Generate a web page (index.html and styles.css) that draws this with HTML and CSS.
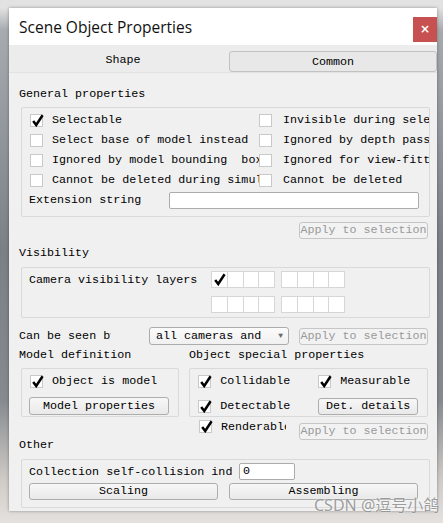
FILE: index.html
```html
<!DOCTYPE html>
<html lang="en">
<head>
    <meta charset="UTF-8">
    <meta name="viewport" content="width=device-width, initial-scale=1.0">
    <title>Scene Object Properties</title>
    <link rel="stylesheet" href="styles.css">
</head>
<body>
    <div class="dialog">
        <div class="titlebar">
            <span class="title">Scene Object Properties</span>
            <span class="close">&#215;</span>
        </div>
        <div class="tabs">
            <div class="tab">Shape</div>
            <div class="tab active">Common</div>
        </div>

        <div class="content">
            <div class="heading first">General properties</div>
            <div class="group general">
                <div class="check-grid">
                    <label class="check"><span class="box on"></span><span class="text">Selectable</span></label>
                    <label class="check right"><span class="box"></span><span class="text">Invisible during selection</span></label>
                    <label class="check"><span class="box"></span><span class="text">Select base of model instead</span></label>
                    <label class="check right"><span class="box"></span><span class="text">Ignored by depth pass</span></label>
                    <label class="check"><span class="box"></span><span class="text">Ignored by model bounding  box</span></label>
                    <label class="check right"><span class="box"></span><span class="text">Ignored for view-fitting</span></label>
                    <label class="check"><span class="box"></span><span class="text">Cannot be deleted during simulation</span></label>
                    <label class="check right"><span class="box"></span><span class="text">Cannot be deleted</span></label>
                    <div class="ext-row">
                        <span class="ext-label">Extension string</span>
                        <span class="field ext-field"></span>
                    </div>
                </div>
            </div>
            <div class="apply-row"><button class="btn disabled apply">Apply to selection</button></div>

            <div class="heading">Visibility</div>
            <div class="group visibility">
                <span class="layers-label">Camera visibility layers</span>
                <div class="layers">
                    <div class="layer-set"><span class="cell on"></span><span class="cell"></span><span class="cell"></span><span class="cell"></span></div>
                    <div class="layer-set"><span class="cell"></span><span class="cell"></span><span class="cell"></span><span class="cell"></span></div>
                    <div class="layer-set"><span class="cell"></span><span class="cell"></span><span class="cell"></span><span class="cell"></span></div>
                    <div class="layer-set"><span class="cell"></span><span class="cell"></span><span class="cell"></span><span class="cell"></span></div>
                </div>
            </div>

            <div class="seen-row">
                <span class="seen-label"><span class="seen-text">Can be seen by</span></span>
                <div class="combo"><span class="combo-text">all cameras and lights</span><span class="arrow">&#9660;</span></div>
                <button class="btn disabled apply">Apply to selection</button>
            </div>

            <div class="heading-row">
                <span class="heading model-heading">Model definition</span>
                <span class="heading">Object special properties</span>
            </div>
            <div class="group-row">
                <div class="group model">
                    <label class="check"><span class="box on"></span><span class="text">Object is model</span></label>
                    <button class="btn model-btn">Model properties</button>
                </div>
                <div class="group special">
                    <label class="check"><span class="box on"></span><span class="text">Collidable</span></label>
                    <label class="check"><span class="box on"></span><span class="text">Measurable</span></label>
                    <label class="check"><span class="box on"></span><span class="text">Detectable</span></label>
                    <button class="btn det-btn">Det. details</button>
                </div>
            </div>
            <div class="render-row">
                <label class="check"><span class="box on"></span><span class="text render-text">Renderable</span></label>
                <button class="btn disabled apply">Apply to selection</button>
            </div>

            <div class="heading other-heading">Other</div>
            <div class="group other">
                <div class="other-row">
                    <span class="coll-label">Collection self-collision indicator</span>
                    <span class="field coll-field">0</span>
                </div>
                <div class="other-row buttons">
                    <button class="btn wide">Scaling</button>
                    <button class="btn wide">Assembling</button>
                </div>
            </div>
        </div>
    </div>
    <div class="watermark">CSDN @逗号小鸽</div>
</body>
</html>
```

FILE: styles.css
```css
* {
    margin: 0;
    padding: 0;
    box-sizing: border-box;
}

body {
    position: relative;
    width: 443px;
    height: 523px;
    overflow: hidden;
    font-family: "Liberation Mono", "DejaVu Sans Mono", monospace;
    font-size: 11.7px;
    line-height: 14px;
    color: #000;
    background: linear-gradient(to bottom, #e2e2e2 0, #e2e2e2 8px, #a7abb0 30px, #7b8087 250px, #868a8f 400px, #cfcbc7 480px, #e4e1de 523px);
}

.dialog {
    margin: 8px 0 0 9px;
    width: 428px;
    height: 503px;
    background: #f0f0f0;
    box-shadow: 0 0 3px rgba(0, 0, 0, 0.35);
}

.titlebar {
    display: flex;
    height: 37px;
    background: #fff;
    padding-left: 10px;
}

.title {
    font-family: "Open Sans", "Noto Sans", sans-serif;
    font-size: 15.5px;
    line-height: 39px;
    color: #111;
}

.close {
    margin: 9px 0 0 auto;
    width: 24px;
    height: 25px;
    background: #c75050;
    color: #fff;
    font-family: "DejaVu Sans", sans-serif;
    font-weight: bold;
    font-size: 12px;
    line-height: 25px;
    text-align: center;
}

.tabs {
    display: flex;
    height: 28px;
    background: #ececec;
    border-bottom: 1px solid #e2e2e2;
}

.tab {
    width: 220px;
    padding-left: 8px;
    text-align: center;
    line-height: 30px;
}

.tab.active {
    width: 208px;
    height: 21px;
    margin-top: 6px;
    padding-left: 0;
    line-height: 20px;
    background: #e8e8e8;
    border: 1px solid #c2c2c2;
    border-radius: 3px;
}

.content {
    padding: 0 9px 0 10px;
}

.heading {
    display: block;
    height: 14px;
    margin-top: 7px;
}

.heading.first {
    margin-top: 14px;
}

.group {
    margin: 7px 0 0 2px;
    width: 409px;
    border: 1px solid #d9d9d9;
    border-radius: 2px;
}

/* checkboxes */
.check {
    display: flex;
    align-items: center;
    height: 20px;
    overflow: hidden;
    white-space: pre;
}

.box {
    position: relative;
    flex: none;
    width: 13px;
    height: 13px;
    margin-right: 9px;
    background: #fff;
    border: 1px solid #c9c9c9;
}

.box.on::after,
.cell.on::after {
    content: "";
    position: absolute;
    left: 1px;
    top: -1px;
    width: 12px;
    height: 13px;
    background: url("data:image/svg+xml,%3Csvg xmlns='http://www.w3.org/2000/svg' width='12' height='13' viewBox='0 0 12 13'%3E%3Cpath d='M1.2 7 L4.2 11 L10.6 1.2' fill='none' stroke='black' stroke-width='2.5'/%3E%3C/svg%3E") no-repeat;
}

.text {
    overflow: hidden;
}

.general {
    height: 110px;
    margin-top: 6px;
    padding: 2px 0 0 8px;
}

.check-grid {
    display: grid;
    grid-template-columns: 229px 170px;
    grid-auto-rows: 20px;
}

.check-grid .check:not(.right) .text {
    width: 207px;
}

.check.right .box {
    margin-right: 11px;
}

.ext-row {
    grid-column: 1 / -1;
    display: flex;
    align-items: center;
    margin-left: -1px;
}

.ext-label {
    width: 140px;
}

.field {
    height: 17px;
    background: #fff;
    border: 1px solid #acacac;
    border-radius: 2px;
    line-height: 15px;
    padding-left: 3px;
}

.ext-field {
    width: 250px;
}

/* buttons */
.btn {
    height: 17px;
    font: inherit;
    line-height: 15px;
    color: #000;
    background: linear-gradient(#f7f7f7, #e9e9e9);
    border: 1px solid #adadad;
    border-radius: 3px;
    text-align: center;
}

.btn.disabled {
    color: #999;
    background: #f2f2f2;
    border-color: #c6c6c6;
}

.apply {
    width: 129px;
}

.apply-row {
    display: flex;
    justify-content: flex-end;
    margin-top: 5px;
}

/* visibility */
.visibility {
    display: flex;
    height: 51px;
    padding: 3px 0 0 7px;
}

.layers-label {
    width: 182px;
    padding-top: 2px;
}

.layers {
    display: grid;
    grid-template-columns: 64px 64px;
    column-gap: 6px;
    row-gap: 3px;
}

.layer-set {
    display: flex;
    height: 17px;
}

.cell {
    position: relative;
    width: 17px;
    height: 17px;
    margin-left: -1px;
    background: #fff;
    border: 1px solid #d6d6d6;
}

.cell:first-child {
    margin-left: 0;
}

.cell.on::after {
    left: 2px;
    top: 1px;
}

/* can be seen by */
.seen-row {
    display: flex;
    align-items: center;
    height: 18px;
    margin-top: 9px;
}

.seen-label {
    width: 130px;
}

.seen-text {
    display: block;
    width: 92px;
    overflow: hidden;
    white-space: nowrap;
}

.combo {
    display: flex;
    align-items: center;
    width: 140px;
    height: 18px;
    padding: 0 5px 0 6px;
    background: linear-gradient(#fbfbfb, #f0f0f0);
    border: 1px solid #acacac;
    border-radius: 3px;
    white-space: nowrap;
}

.combo-text {
    width: 106px;
    overflow: hidden;
}

.arrow {
    margin-left: auto;
    font-size: 8px;
    color: #6a6a6a;
}

.seen-row .apply {
    margin-left: 10px;
}

/* model + special */
.heading-row {
    display: flex;
    margin-top: 3px;
}

.heading-row .heading {
    margin-top: 0;
}

.model-heading {
    width: 170px;
}

.group-row {
    display: flex;
    margin-top: 6px;
}

.group-row .group {
    margin-top: 0;
    height: 49px;
}

.model {
    width: 159px;
    padding: 2px 0 0 7px;
}

.model .check {
    margin-left: 1px;
}

.model-btn {
    display: block;
    width: 140px;
    height: 18px;
    margin-top: 6px;
}

.group-row .special {
    display: grid;
    grid-template-columns: 120px 100px;
    grid-template-rows: 20px 20px;
    row-gap: 5px;
    width: 240px;
    margin-left: 10px;
    padding: 2px 0 0 8px;
}

.det-btn {
    align-self: center;
    width: 100px;
}

.render-row {
    display: flex;
    height: 19px;
    margin-top: 1px;
    padding-left: 180px;
}

.render-row .check {
    height: 17px;
}

.render-text {
    width: 65px;
}

.render-row .apply {
    margin: 5px 0 0 13px;
}

/* other */
.other-heading {
    margin-top: 1px;
}

.other {
    height: 49px;
    padding: 3px 0 0 7px;
}

.other-row {
    display: flex;
    align-items: center;
    height: 17px;
}

.coll-label {
    width: 203px;
    overflow: hidden;
    white-space: nowrap;
    margin-right: 7px;
}

.coll-field {
    width: 56px;
}

.other-row.buttons {
    margin-top: 3px;
    gap: 11px;
}

.wide {
    width: 189px;
}

.watermark {
    position: absolute;
    left: 314px;
    top: 495px;
    font-family: "Noto Sans", "Noto Sans CJK SC", sans-serif;
    font-size: 16px;
    line-height: 20px;
    color: rgba(140, 140, 140, 0.85);
    text-shadow: 0 0 2px rgba(255, 255, 255, 0.9);
    white-space: nowrap;
}
```
